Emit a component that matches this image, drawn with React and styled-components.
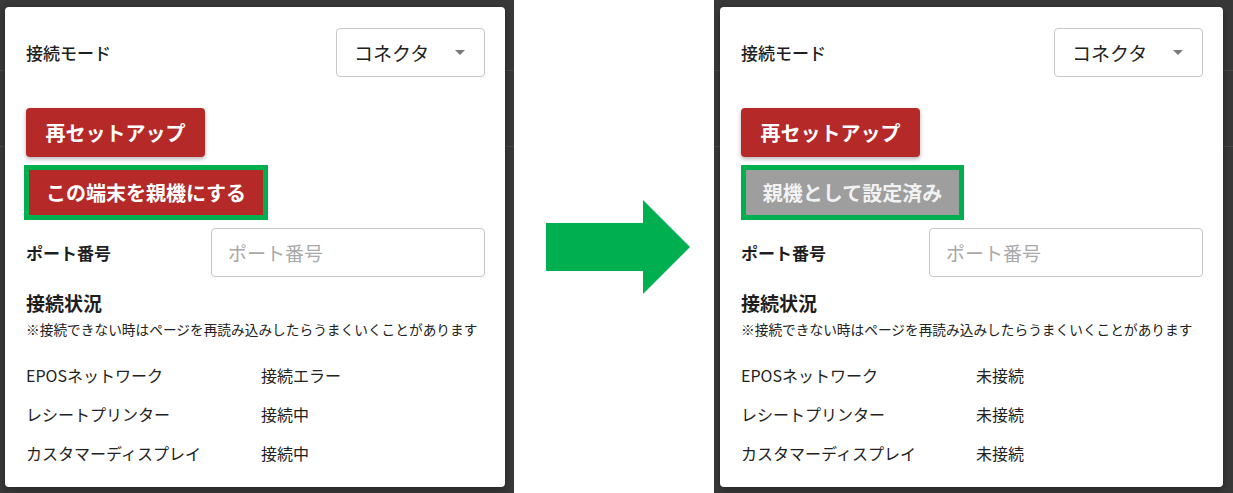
import React from "react";
import styled, { createGlobalStyle } from "styled-components";

const GlobalStyle = createGlobalStyle`
    html, body {
        margin: 0;
        padding: 0;
        background: #ffffff;
    }
    body {
        font-family: "Noto Sans CJK JP", "Noto Sans", sans-serif;
        color: #212121;
    }
`;

const Page = styled.div`
    display: flex;
    width: 1233px;
    height: 493px;
    overflow: hidden;
`;

// dark backdrop behind the dialog, with the faint table rows showing through
const Backdrop = styled.div`
    display: flex;
    box-sizing: border-box;
    width: ${props => props.$w}px;
    height: 100%;
    padding: ${props => props.$pad};
    background:
        linear-gradient(#474747, #474747) 0 70px / 100% 1px no-repeat,
        linear-gradient(#474747, #474747) 0 146px / 100% 1px no-repeat,
        #383838;
`;

const Card = styled.div`
    flex: 1;
    display: flex;
    flex-direction: column;
    padding: 21px 20px 0 21px;
    background: #ffffff;
    border-radius: 4px;
    box-shadow: 0 2px 6px rgba(0, 0, 0, 0.35);
`;

const FieldRow = styled.div`
    display: flex;
    align-items: center;
    justify-content: space-between;
    height: 49px;
    margin-top: ${props => props.$top || 0}px;
`;

const FieldLabel = styled.span`
    font-size: 17px;
    font-weight: ${props => props.$bold ? 700 : 500};
    color: #1e1e1e;
`;

const Select = styled.div`
    display: flex;
    align-items: center;
    box-sizing: border-box;
    width: 149px;
    height: 49px;
    padding-left: 17px;
    border: 1px solid #c9c9c9;
    border-radius: 4px;
    font-size: 19px;
    color: #222;
`;

const Caret = styled.span`
    margin-left: auto;
    margin-right: 19px;
    width: 0;
    height: 0;
    border-left: 5px solid transparent;
    border-right: 5px solid transparent;
    border-top: 5px solid #7a7a7a;
`;

const PortInput = styled.input`
    box-sizing: border-box;
    width: 274px;
    height: 49px;
    padding: 0 16px;
    border: 1px solid #c9c9c9;
    border-radius: 4px;
    font-family: inherit;
    font-size: 19px;
    color: #222;
    outline: none;

    &::placeholder {
        color: #a9a9a9;
    }
`;

const ActionButton = styled.button`
    display: flex;
    align-items: center;
    justify-content: center;
    box-sizing: border-box;
    width: ${props => props.$w}px;
    height: ${props => props.$h || 49}px;
    margin-top: ${props => props.$top || 0}px;
    padding: 0;
    border: none;
    border-radius: ${props => props.$square ? 0 : 4}px;
    background: ${props => props.$muted ? "#9e9e9e" : "#b52929"};
    color: ${props => props.$muted ? "#f2f2f2" : "#ffffff"};
    font-family: inherit;
    font-size: 20px;
    font-weight: 700;
    box-shadow: ${props => props.$square ? "none" : "0 2px 4px rgba(0, 0, 0, 0.3)"};
`;

// green annotation frame drawn around the changed button
const Highlight = styled.div`
    align-self: flex-start;
    margin-top: 8px;
    margin-left: ${props => props.$shift || 0}px;
    border: 5px solid #00b050;
`;

const SectionTitle = styled.div`
    margin-top: 13px;
    font-size: 19px;
    font-weight: 700;
    line-height: 26px;
    color: #1e1e1e;
`;

const Note = styled.div`
    margin-top: 3px;
    font-size: 13.7px;
    line-height: 20px;
    color: #222;
    white-space: nowrap;
`;

const StatusGrid = styled.div`
    display: grid;
    grid-template-columns: 235px 1fr;
    grid-auto-rows: 39px;
    align-items: center;
    margin-top: 16px;
    font-size: 16px;
    color: #222;
`;

const Gap = styled.div`
    display: flex;
    align-items: center;
    justify-content: center;
    width: 200px;
    padding-left: 8px;
    box-sizing: border-box;
`;

function Arrow() {
    return (
        <svg width="144" height="94" viewBox="0 0 144 94">
            <polygon points="0,23 97,23 97,0 144,47 97,94 97,71 0,71" fill="#00b050" />
        </svg>
    );
}

function DeviceDialog({ configured, status }) {
    return (
        <Card>
            <FieldRow>
                <FieldLabel>接続モード</FieldLabel>
                <Select>
                    コネクタ
                    <Caret />
                </Select>
            </FieldRow>
            <ActionButton $w={179} $top={31}>再セットアップ</ActionButton>
            {configured ? (
                <Highlight>
                    <ActionButton $w={213} $h={45} $square $muted>親機として設定済み</ActionButton>
                </Highlight>
            ) : (
                <Highlight $shift={-2}>
                    <ActionButton $w={234} $h={45} $square>この端末を親機にする</ActionButton>
                </Highlight>
            )}
            <FieldRow $top={8}>
                <FieldLabel $bold>ポート番号</FieldLabel>
                <PortInput placeholder="ポート番号" />
            </FieldRow>
            <SectionTitle>接続状況</SectionTitle>
            <Note>※接続できない時はページを再読み込みしたらうまくいくことがあります</Note>
            <StatusGrid>
                <span>EPOSネットワーク</span>
                <span>{status[0]}</span>
                <span>レシートプリンター</span>
                <span>{status[1]}</span>
                <span>カスタマーディスプレイ</span>
                <span>{status[2]}</span>
            </StatusGrid>
        </Card>
    );
}

export default function App() {
    return (
        <>
            <GlobalStyle />
            <Page>
                <Backdrop $w={514} $pad="7px 9px 6px 5px">
                    <DeviceDialog status={["接続エラー", "接続中", "接続中"]} />
                </Backdrop>
                <Gap>
                    <Arrow />
                </Gap>
                <Backdrop $w={519} $pad="7px 10px 6px 6px">
                    <DeviceDialog configured status={["未接続", "未接続", "未接続"]} />
                </Backdrop>
            </Page>
        </>
    );
}
